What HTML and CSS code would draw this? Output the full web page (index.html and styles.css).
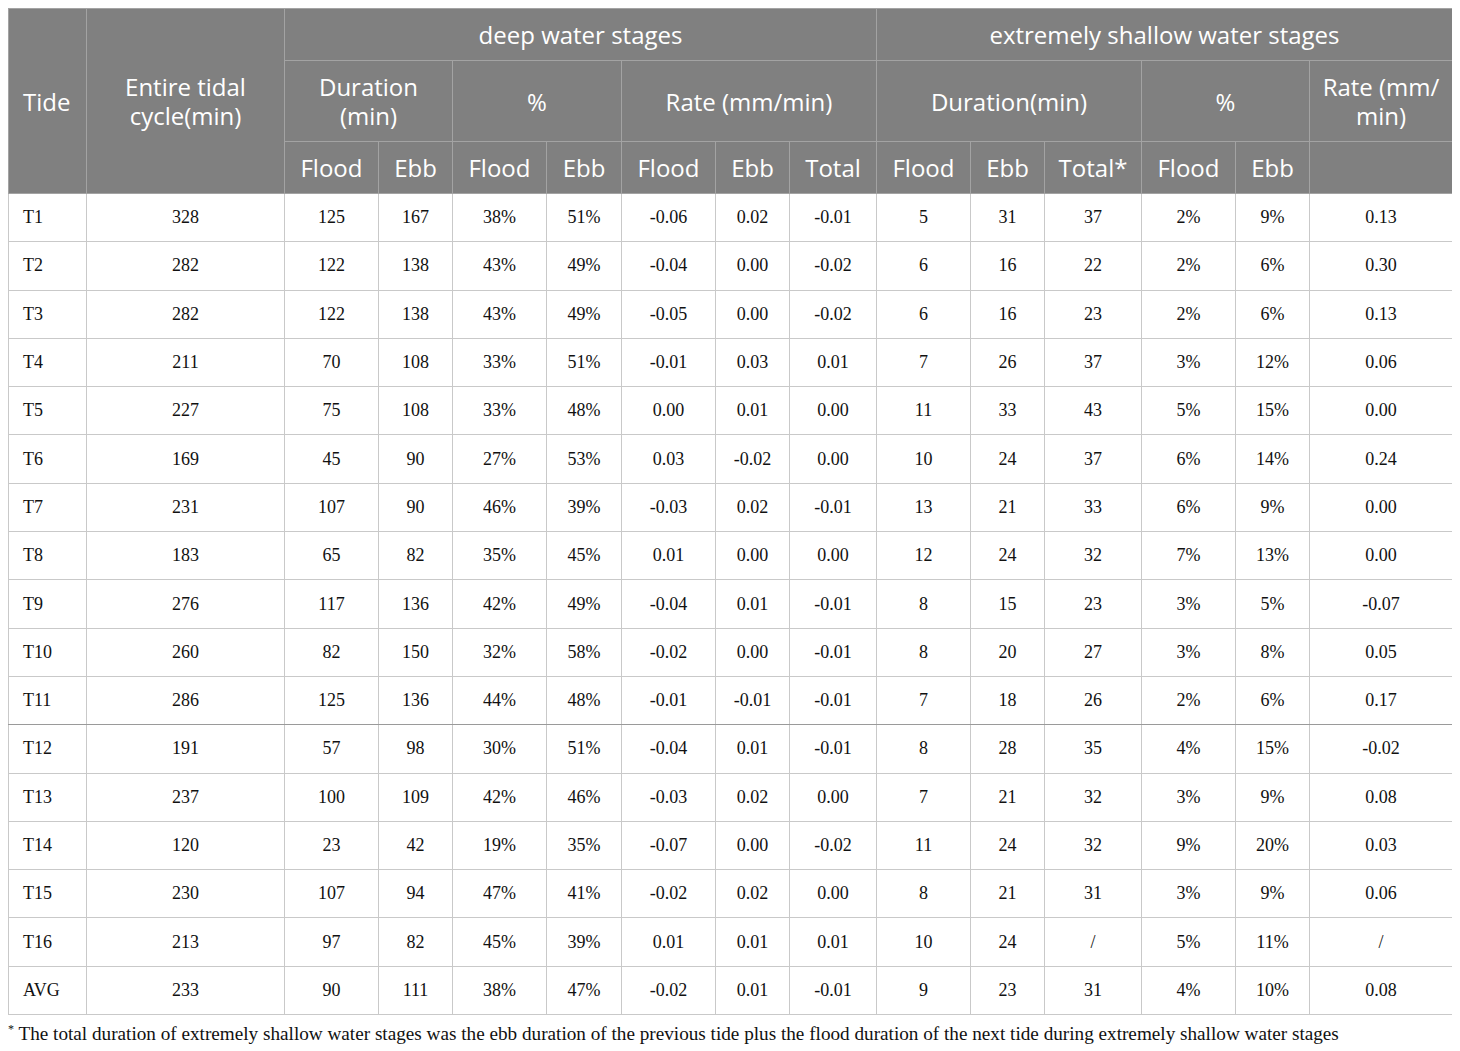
FILE: index.html
```html
<!DOCTYPE html>
<html lang="en">
<head>
    <meta charset="UTF-8">
    <title>Tidal stages</title>
    <link rel="stylesheet" href="styles.css">
</head>
<body>
    <table class="tide-table">
        <colgroup>
            <col style="width:78px">
            <col style="width:198px">
            <col style="width:94px">
            <col style="width:74px">
            <col style="width:94px">
            <col style="width:75px">
            <col style="width:94px">
            <col style="width:74px">
            <col style="width:87px">
            <col style="width:94px">
            <col style="width:74px">
            <col style="width:97px">
            <col style="width:94px">
            <col style="width:74px">
            <col style="width:143px">
        </colgroup>
        <thead>
            <tr class="row-group">
                <th rowspan="3" class="left">Tide</th>
                <th rowspan="3">Entire tidal<br>cycle(min)</th>
                <th colspan="7">deep water stages</th>
                <th colspan="6">extremely shallow water stages</th>
            </tr>
            <tr class="row-sub">
                <th colspan="2">Duration<br>(min)</th>
                <th colspan="2">%</th>
                <th colspan="3">Rate (mm/min)</th>
                <th colspan="3">Duration(min)</th>
                <th colspan="2">%</th>
                <th>Rate (mm/<br>min)</th>
            </tr>
            <tr class="row-leaf">
                <th>Flood</th><th>Ebb</th>
                <th>Flood</th><th>Ebb</th>
                <th>Flood</th><th>Ebb</th><th>Total</th>
                <th>Flood</th><th>Ebb</th><th>Total*</th>
                <th>Flood</th><th>Ebb</th>
                <th></th>
            </tr>
        </thead>
        <tbody id="rows"></tbody>
    </table>
    <p class="note"><sup>*</sup> The total duration of extremely shallow water stages was the ebb duration of the previous tide plus the flood duration of the next tide during extremely shallow water stages</p>

    <script>
        // tide, cycle, deep (dur F/E, % F/E, rate F/E/T), shallow (dur F/E/T, % F/E, rate)
        const data = [
            ['T1', 328, 125, 167, '38%', '51%', '-0.06', '0.02', '-0.01', 5, 31, 37, '2%', '9%', '0.13'],
            ['T2', 282, 122, 138, '43%', '49%', '-0.04', '0.00', '-0.02', 6, 16, 22, '2%', '6%', '0.30'],
            ['T3', 282, 122, 138, '43%', '49%', '-0.05', '0.00', '-0.02', 6, 16, 23, '2%', '6%', '0.13'],
            ['T4', 211, 70, 108, '33%', '51%', '-0.01', '0.03', '0.01', 7, 26, 37, '3%', '12%', '0.06'],
            ['T5', 227, 75, 108, '33%', '48%', '0.00', '0.01', '0.00', 11, 33, 43, '5%', '15%', '0.00'],
            ['T6', 169, 45, 90, '27%', '53%', '0.03', '-0.02', '0.00', 10, 24, 37, '6%', '14%', '0.24'],
            ['T7', 231, 107, 90, '46%', '39%', '-0.03', '0.02', '-0.01', 13, 21, 33, '6%', '9%', '0.00'],
            ['T8', 183, 65, 82, '35%', '45%', '0.01', '0.00', '0.00', 12, 24, 32, '7%', '13%', '0.00'],
            ['T9', 276, 117, 136, '42%', '49%', '-0.04', '0.01', '-0.01', 8, 15, 23, '3%', '5%', '-0.07'],
            ['T10', 260, 82, 150, '32%', '58%', '-0.02', '0.00', '-0.01', 8, 20, 27, '3%', '8%', '0.05'],
            ['T11', 286, 125, 136, '44%', '48%', '-0.01', '-0.01', '-0.01', 7, 18, 26, '2%', '6%', '0.17'],
            ['T12', 191, 57, 98, '30%', '51%', '-0.04', '0.01', '-0.01', 8, 28, 35, '4%', '15%', '-0.02'],
            ['T13', 237, 100, 109, '42%', '46%', '-0.03', '0.02', '0.00', 7, 21, 32, '3%', '9%', '0.08'],
            ['T14', 120, 23, 42, '19%', '35%', '-0.07', '0.00', '-0.02', 11, 24, 32, '9%', '20%', '0.03'],
            ['T15', 230, 107, 94, '47%', '41%', '-0.02', '0.02', '0.00', 8, 21, 31, '3%', '9%', '0.06'],
            ['T16', 213, 97, 82, '45%', '39%', '0.01', '0.01', '0.01', 10, 24, '/', '5%', '11%', '/'],
            ['AVG', 233, 90, 111, '38%', '47%', '-0.02', '0.01', '-0.01', 9, 23, 31, '4%', '10%', '0.08']
        ];

        const body = document.getElementById('rows');
        data.forEach(function (row) {
            const tr = document.createElement('tr');
            if (row[0] === 'T11') tr.className = 'split';
            row.forEach(function (value, i) {
                const td = document.createElement('td');
                td.textContent = value;
                if (i === 0) td.className = 'left';
                tr.appendChild(td);
            });
            body.appendChild(tr);
        });
    </script>
</body>
</html>
```

FILE: styles.css
```css
body {
    margin: 8px;
    background: #fff;
    color: #111;
    font-family: "Liberation Serif", serif;
}
.tide-table {
    border-collapse: collapse;
    table-layout: fixed;
    width: 1445px;
}
.tide-table th {
    background: #808080;
    color: #fff;
    font-family: "Open Sans", sans-serif;
    font-weight: normal;
    font-size: 24px;
    line-height: 29px;
    text-align: center;
    padding: 0 4px;
    border: 1px solid #a3a3a3;
}
.tide-table th.left {
    text-align: left;
    padding-left: 14px;
}
.row-group th { height: 51px; }
.row-sub th { height: 80px; }
.row-leaf th { height: 51px; }
.tide-table td {
    height: 47.3px;
    padding: 0 4px;
    font-size: 18px;
    text-align: center;
    border: 1px solid #c9c9c9;
}
.tide-table td.left {
    text-align: left;
    padding-left: 14px;
}
.tide-table tr.split td {
    border-bottom-color: #9a9a9a;
}
.note {
    margin: 3px 0 0;
    font-size: 19.2px;
    line-height: 22px;
    color: #111;
}
.note sup {
    font-size: 12px;
}
```
